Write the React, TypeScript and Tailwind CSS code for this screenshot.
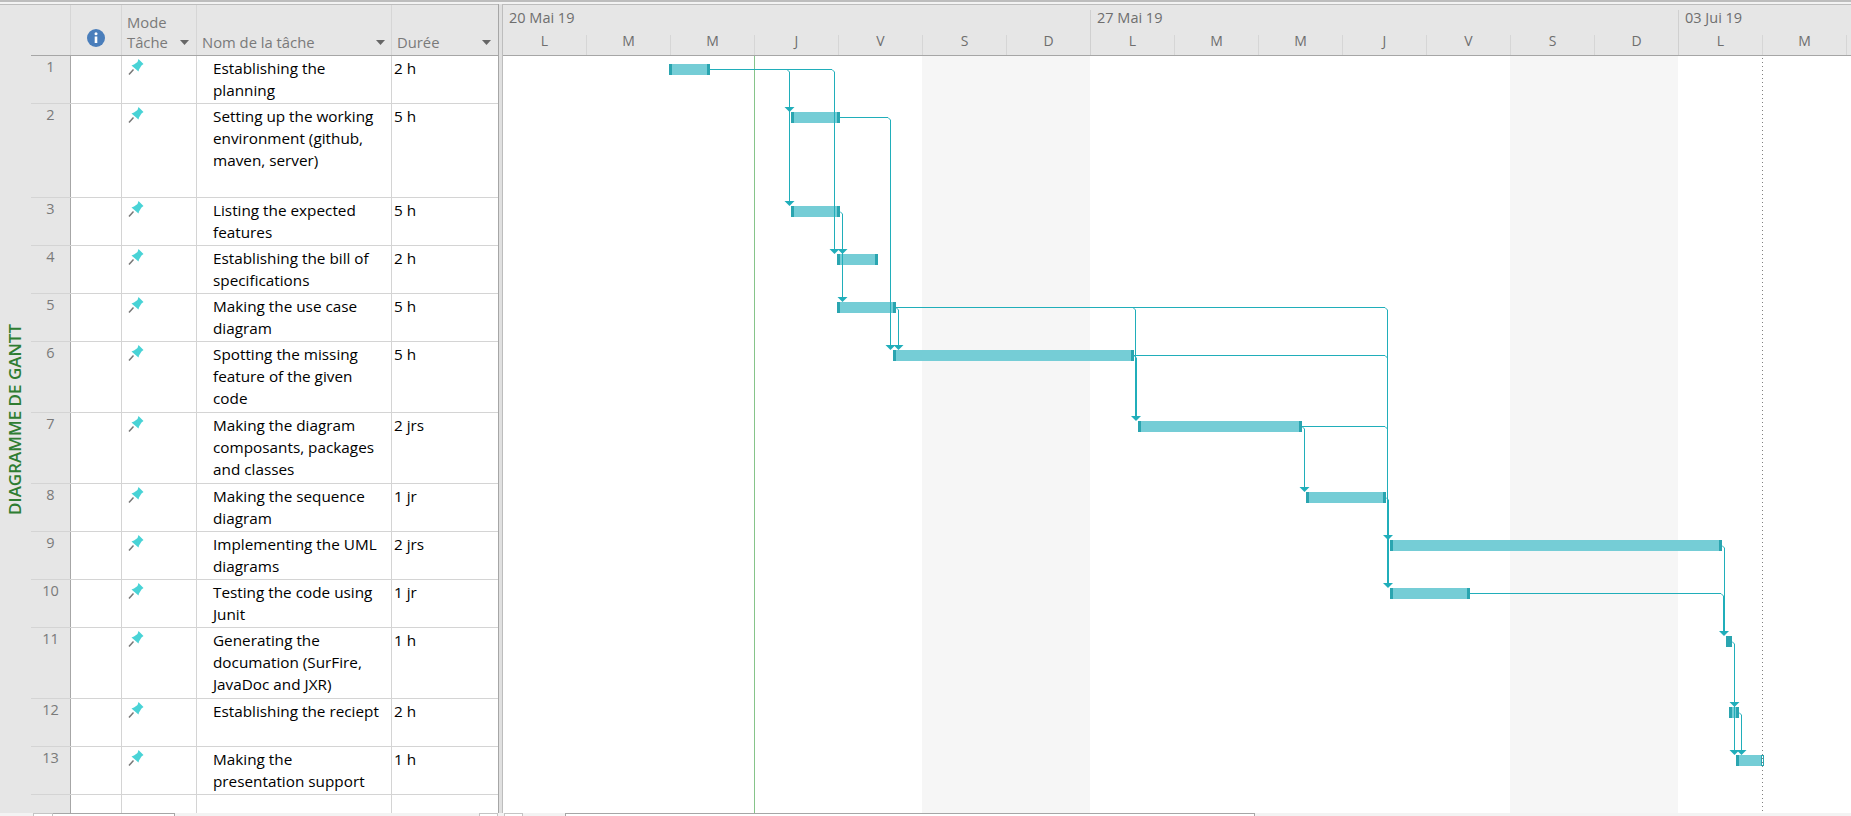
const tasks = [
  { name: "Establishing the\nplanning", duration: "2 h", h: "h-[48px]" },
  { name: "Setting up the working\nenvironment (github,\nmaven, server)", duration: "5 h", h: "h-[94px]" },
  { name: "Listing the expected\nfeatures", duration: "5 h", h: "h-[48px]" },
  { name: "Establishing the bill of\nspecifications", duration: "2 h", h: "h-[48px]" },
  { name: "Making the use case\ndiagram", duration: "5 h", h: "h-[48px]" },
  { name: "Spotting the missing\nfeature of the given\ncode", duration: "5 h", h: "h-[71px]" },
  { name: "Making the diagram\ncomposants, packages\nand classes", duration: "2 jrs", h: "h-[71px]" },
  { name: "Making the sequence\ndiagram", duration: "1 jr", h: "h-[48px]" },
  { name: "Implementing the UML\ndiagrams", duration: "2 jrs", h: "h-[48px]" },
  { name: "Testing the code using\nJunit", duration: "1 jr", h: "h-[48px]" },
  { name: "Generating the\ndocumation (SurFire,\nJavaDoc and JXR)", duration: "1 h", h: "h-[71px]" },
  { name: "Establishing the reciept", duration: "2 h", h: "h-[48px]" },
  { name: "Making the\npresentation support", duration: "1 h", h: "h-[48px]" },
]

// x, x2, y of each bar, in page pixels
const bars = [
  [669, 710, 64],
  [791, 840, 112],
  [791, 840, 206],
  [837, 878, 254],
  [837, 896, 302],
  [893, 1134, 350],
  [1138, 1302, 421],
  [1306, 1386, 492],
  [1390, 1722, 540],
  [1390, 1470, 588],
  [1729, 1739, 707],
]

const links = [
  "M710 69.5H832L834.5 72V249",
  "M787 69.5L789.5 72V107",
  "M789.5 107V201",
  "M840 117.5H888L890.5 120V345",
  "M840 211.5L842.5 214V297",
  "M896 307.5H1385L1387.5 310V490",
  "M896 307.5L898.5 310V345",
  "M1133 307.5L1135.5 310V416",
  "M1134 355.5H1385L1387.5 358V490",
  "M1134 355.5L1136.5 358V416",
  "M1302 426.5H1385L1387.5 429",
  "M1302 426.5L1304.5 429V487",
  "M1386 497.5L1388.5 500V583",
  "M1387.5 490V583",
  "M1722 545.5L1724.5 548V631",
  "M1470 593.5H1721L1723.5 596V631",
  "M1732 641.5L1734.5 644V702",
  "M1734.5 702V750",
  "M1739 712.5L1741.5 715V750",
]

// centre x and top y of each arrow head
const arrows = [
  [789.5, 107], [789.5, 201], [834.5, 249], [842.5, 249], [842.5, 297],
  [890.5, 345], [898.5, 345], [1136, 416], [1304.5, 487], [1388, 535],
  [1388, 583], [1724, 631], [1734.5, 702], [1734.5, 750], [1741.5, 750],
]

const days = ["L", "M", "M", "J", "V", "S", "D"]

function Pin() {
  return (
    <svg className="w-[16px] h-[16px]" viewBox="0 0 16 16">
      <path d="M5.5 10.5L1 15.5" stroke="#777" strokeWidth="1.5" />
      <path d="M10.5 0L15.5 5L13.5 6.5L11 10.5L10.5 12.5L3.5 6.5L6 5.5L9.5 3Z" fill="#49d3d6" />
    </svg>
  )
}

function InfoIcon() {
  return (
    <svg className="w-[18px] h-[18px]" viewBox="0 0 18 18">
      <circle cx="9" cy="9" r="9" fill="#4a7ebb" />
      <circle cx="9" cy="4.8" r="1.5" fill="#fff" />
      <rect x="7.7" y="7.5" width="2.6" height="6.5" fill="#fff" />
    </svg>
  )
}

function Caret() {
  return (
    <svg className="w-[9px] h-[5px] shrink-0" viewBox="0 0 9 5">
      <path d="M0 0H9L4.5 5Z" fill="#666" />
    </svg>
  )
}

function Week({ label, labels, className }: { label: string; labels: string[]; className: string }) {
  return (
    <div className={`shrink-0 mt-[5px] border-l border-[#d0d0d0] ${className}`}>
      <div className="h-[25px] pl-[6px] text-[14.5px] leading-[16px] text-[#6e6e6e] whitespace-nowrap">{label}</div>
      <div className="flex h-[20px]">
        {labels.map((d, i) => (
          <div
            key={i}
            className="w-[84px] shrink-0 border-r border-[#d6d6d6] text-center text-[14px] leading-[12px] text-[#6e6e6e]"
          >
            {d}
          </div>
        ))}
      </div>
    </div>
  )
}

export default function App() {
  return (
    <div className="w-[1851px] h-[816px] overflow-hidden bg-[#f3f3f3] flex flex-col font-['Open_Sans',sans-serif]">
      <div className="h-[4px] border-t-2 border-[#bdbdbd] shrink-0" />

      <div className="flex h-[809px] shrink-0">
        {/* bande verticale */}
        <div className="w-[31px] shrink-0 bg-[#e6e6e6] border-t border-[#bdbdbd] flex items-end pb-[298px] pl-[5px]">
          <span className="[writing-mode:vertical-rl] rotate-180 text-[17px] leading-[20px] font-semibold text-[#2f7d32] whitespace-nowrap">
            DIAGRAMME DE GANTT
          </span>
        </div>

        {/* table des taches */}
        <div className="w-[467px] shrink-0 flex flex-col bg-white">
          <div className="flex h-[52px] shrink-0 bg-[#e6e6e6] border-t border-b border-t-[#bdbdbd] border-b-[#a6a6a6] text-[14.8px] leading-[20px] text-[#7a7a7a]">
            <div className="w-[40px] shrink-0 border-r border-[#d6d6d6]" />
            <div className="w-[51px] shrink-0 border-r border-[#d6d6d6] flex justify-center pt-[24px]">
              <InfoIcon />
            </div>
            <div className="w-[75px] shrink-0 border-r border-[#d6d6d6] pl-[5px] pt-[7px]">
              <div>Mode</div>
              <div className="flex items-center justify-between pr-[7px]">
                <span>Tâche</span>
                <Caret />
              </div>
            </div>
            <div className="w-[195px] shrink-0 border-r border-[#d6d6d6] pl-[5px] pr-[6px] pt-[27px] flex justify-between">
              <span>Nom de la tâche</span>
              <span className="pt-[8px]"><Caret /></span>
            </div>
            <div className="flex-1 pl-[5px] pr-[7px] pt-[27px] flex justify-between">
              <span>Durée</span>
              <span className="pt-[8px]"><Caret /></span>
            </div>
          </div>

          {tasks.map((t, i) => (
            <div key={i} className={`flex shrink-0 border-b border-[#d4d4d4] ${t.h}`}>
              <div className="w-[40px] shrink-0 bg-[#e6e6e6] border-r border-[#a6a6a6] text-center text-[14.5px] leading-[20px] text-[#7a7a7a] pt-[1px]">
                {i + 1}
              </div>
              <div className="w-[51px] shrink-0 border-r border-[#d4d4d4]" />
              <div className="w-[75px] shrink-0 border-r border-[#d4d4d4] pl-[6px] pt-[3px]">
                <Pin />
              </div>
              <div className="w-[195px] shrink-0 border-r border-[#d4d4d4] pl-[16px] pt-[1px] text-[15.3px] leading-[22px] text-black whitespace-pre-line">
                {t.name}
              </div>
              <div className="flex-1 pl-[2px] pt-[1px] text-[15.3px] leading-[22px] text-black">{t.duration}</div>
            </div>
          ))}

          <div className="flex flex-1">
            <div className="w-[40px] shrink-0 bg-[#e6e6e6] border-r border-[#a6a6a6]" />
            <div className="w-[51px] shrink-0 border-r border-[#d4d4d4]" />
            <div className="w-[75px] shrink-0 border-r border-[#d4d4d4]" />
            <div className="w-[195px] shrink-0 border-r border-[#d4d4d4]" />
          </div>
        </div>

        {/* separateur */}
        <div className="w-[4px] shrink-0 bg-[#e0e0e0] border-l border-[#a6a6a6]" />

        {/* diagramme */}
        <div className="flex-1 min-w-0 flex flex-col border-l border-[#bdbdbd]">
          <div className="flex h-[52px] shrink-0 overflow-hidden bg-[#e6e6e6] border-t border-b border-t-[#bdbdbd] border-b-[#a6a6a6]">
            <Week label="20 Mai 19" labels={days} className="w-[588px] -ml-px" />
            <Week label="27 Mai 19" labels={days} className="w-[588px]" />
            <Week label="03 Jui 19" labels={days.slice(0, 2)} className="w-[170px]" />
          </div>

          <div className="relative flex flex-1 bg-white">
            <div className="w-[419px] shrink-0" />
            <div className="w-[168px] shrink-0 bg-[#f6f6f6]" />
            <div className="w-[420px] shrink-0" />
            <div className="w-[168px] shrink-0 bg-[#f6f6f6]" />

            <svg className="absolute left-0 top-0 w-[1348px] h-[757px]" viewBox="503 56 1348 757" fill="none">
              <path d="M754.5 56V813" stroke="#86c48a" />
              <path d="M1762.5 58V813" stroke="#808080" strokeDasharray="1 3" />

              {bars.map(([x, x2, y], i) => (
                <g key={i} shapeRendering="crispEdges">
                  <rect x={x} y={y} width={x2 - x} height={11} fill="#75cdd6" />
                  <rect x={x} y={y} width={3} height={11} fill="#2aa5b0" />
                  <rect x={x2 - 3} y={y} width={3} height={11} fill="#2aa5b0" />
                </g>
              ))}
              <rect x={1726} y={636} width={6} height={11} fill="#2aa5b0" shapeRendering="crispEdges" />
              <g shapeRendering="crispEdges">
                <rect x={1736} y={755} width={25} height={11} fill="#75cdd6" />
                <rect x={1736} y={755} width={3} height={11} fill="#2aa5b0" />
                <rect x={1761.5} y={755.5} width={2} height={10} stroke="#2aa5b0" />
              </g>

              {links.map((d, i) => (
                <path key={i} d={d} stroke="#20aeba" />
              ))}
              {arrows.map(([cx, y], i) => (
                <path key={i} d={`M${cx - 5} ${y}H${cx + 5}L${cx} ${y + 5}Z`} fill="#20aeba" />
              ))}
            </svg>
          </div>
        </div>
      </div>

      {/* barres de defilement */}
      <div className="flex h-[3px] shrink-0 pl-[33px]">
        <div className="w-[20px] border-t border-l border-r border-[#c4c4c4] bg-white" />
        <div className="w-[122px] border-t border-r border-[#a6a6a6] bg-white" />
        <div className="w-[304px]" />
        <div className="w-[19px] border-t border-l border-r border-[#c4c4c4] bg-white" />
        <div className="w-[6px]" />
        <div className="w-[19px] border-t border-l border-r border-[#c4c4c4] bg-white" />
        <div className="w-[42px]" />
        <div className="w-[690px] border-t border-l border-r border-[#a6a6a6] bg-white" />
      </div>
    </div>
  )
}
